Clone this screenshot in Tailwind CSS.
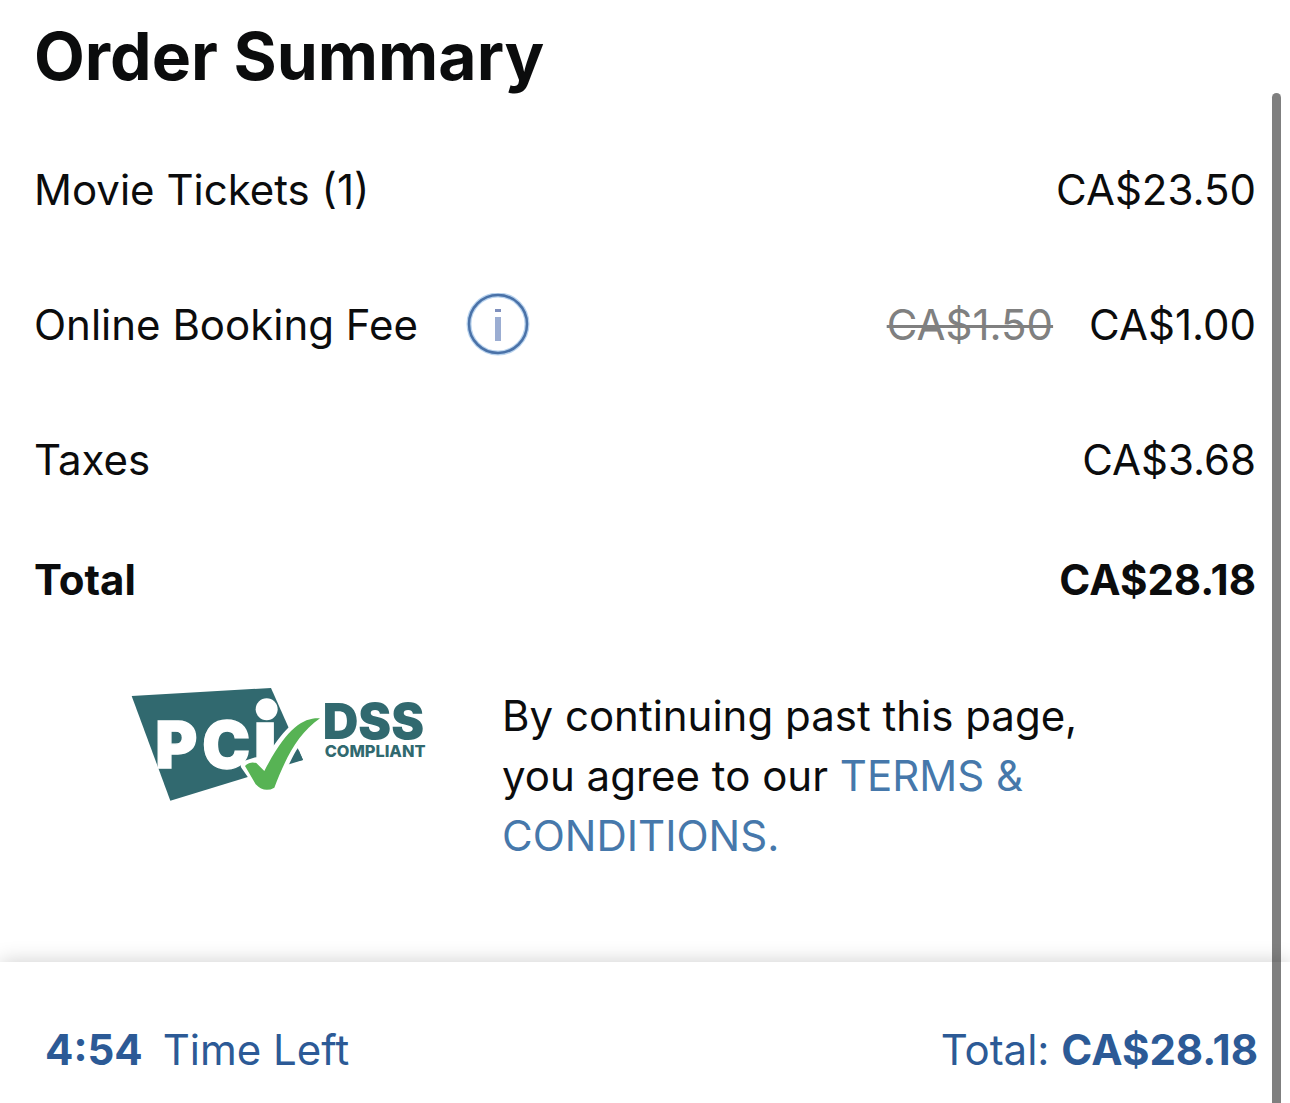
<!DOCTYPE html>
<html lang="en">
<head>
<meta charset="utf-8">
<meta name="viewport" content="width=device-width, initial-scale=1">
<title>Order Summary</title>
<script src="https://cdn.jsdelivr.net/npm/@tailwindcss/browser@4"></script>
</head>
<body class="relative flex min-h-screen flex-col overflow-hidden bg-white font-['Inter',sans-serif] text-[42px] leading-[60px] font-normal text-[#0b0c0d]">
  <main class="grow pt-4 pb-24">
    <h1 class="mb-[26px] px-[34px] text-[66px] leading-[80px] font-bold">Order Summary</h1>

    <div class="px-[34px]">
      <table class="w-full">
        <tbody>
          <tr class="h-[135px]">
            <th scope="row" class="text-left font-normal">Movie Tickets (1)</th>
            <td class="text-right">CA$23.50</td>
          </tr>
          <tr class="h-[135px]">
            <th scope="row" class="text-left font-normal">
              <span class="flex items-center gap-12">
                Online Booking Fee
                <button type="button" aria-label="About the booking fee" class="size-16">
                  <svg viewBox="0 0 64 64" class="size-16" fill="none" aria-hidden="true">
                    <circle cx="32" cy="31" r="29" stroke="#b9d3ee" stroke-width="5"/>
                    <circle cx="32" cy="31" r="29" stroke="#4a72a8" stroke-width="2.5"/>
                    <path d="M32 24v24" stroke="#9badd2" stroke-width="6"/>
                    <path d="M29 17.5h6" stroke="#7f90bd" stroke-width="3"/>
                  </svg>
                </button>
              </span>
            </th>
            <td class="text-right"><s class="mr-9 text-[#808080] decoration-3">CA$1.50</s>CA$1.00</td>
          </tr>
          <tr class="h-[135px]">
            <th scope="row" class="text-left font-normal">Taxes</th>
            <td class="text-right">CA$3.68</td>
          </tr>
          <tr class="h-[105px] font-bold">
            <th scope="row" class="text-left">Total</th>
            <td class="text-right">CA$28.18</td>
          </tr>
        </tbody>
      </table>
    </div>

    <section class="mt-[54px] flex items-start gap-[76px] pl-[131px]">
      <svg viewBox="33 30 885 345" class="h-[115px] w-[295px] shrink-0 overflow-visible" role="img" aria-label="PCI DSS Compliant">
        <path d="M35 60 453 36 549 252 151 374Z" fill="#31696f"/>
        <text y="275" fill="#fff" stroke="#fff" stroke-width="4" font-family="Inter, sans-serif" font-weight="900" font-size="192"><tspan x="106">P</tspan><tspan x="247">C</tspan><tspan x="399" font-size="246">ı</tspan></text>
        <circle cx="440" cy="100" r="33" fill="#fff"/>
        <path d="M600 127C540 128 500 166 432 280L408 258 376 268 425 338Q440 348 462 335C500 240 525 180 600 127Z" fill="#fff" stroke="#fff" stroke-width="28" stroke-linejoin="round"/>
        <path d="M549 252 519 258 536 222Z" fill="#31696f"/>
        <path d="M600 127C550 124 500 155 433 285L409 261Q388 255 375 270L407 325Q433 352 463 335C495 252 530 176 600 127Z" fill="#57b354"/>
        <g fill="#31696f" font-family="Inter, sans-serif">
          <text x="608" y="189" font-size="148" font-weight="900">DSS</text>
          <text x="614" y="242" font-size="49" font-weight="800">COMPLIANT</text>
        </g>
      </svg>
      <p class="max-w-[620px]">By continuing past this page, you agree to our <a href="#terms" class="text-[#4678ab]">TERMS &amp; CONDITIONS.</a></p>
    </section>
  </main>

  <footer class="flex items-center justify-between bg-white pt-[58px] pr-8 pb-[23px] pl-[45px] text-[#2c5a96] shadow-[0_0_20px_rgba(0,0,0,0.2)]">
    <p class="flex gap-5"><strong class="font-bold">4:54</strong><span>Time Left</span></p>
    <p>Total: <strong class="font-bold">CA$28.18</strong></p>
  </footer>

  <div class="absolute top-[93px] right-[9px] bottom-0 w-[9px] rounded-t-full bg-black/50" aria-hidden="true"></div>
</body>
</html>
